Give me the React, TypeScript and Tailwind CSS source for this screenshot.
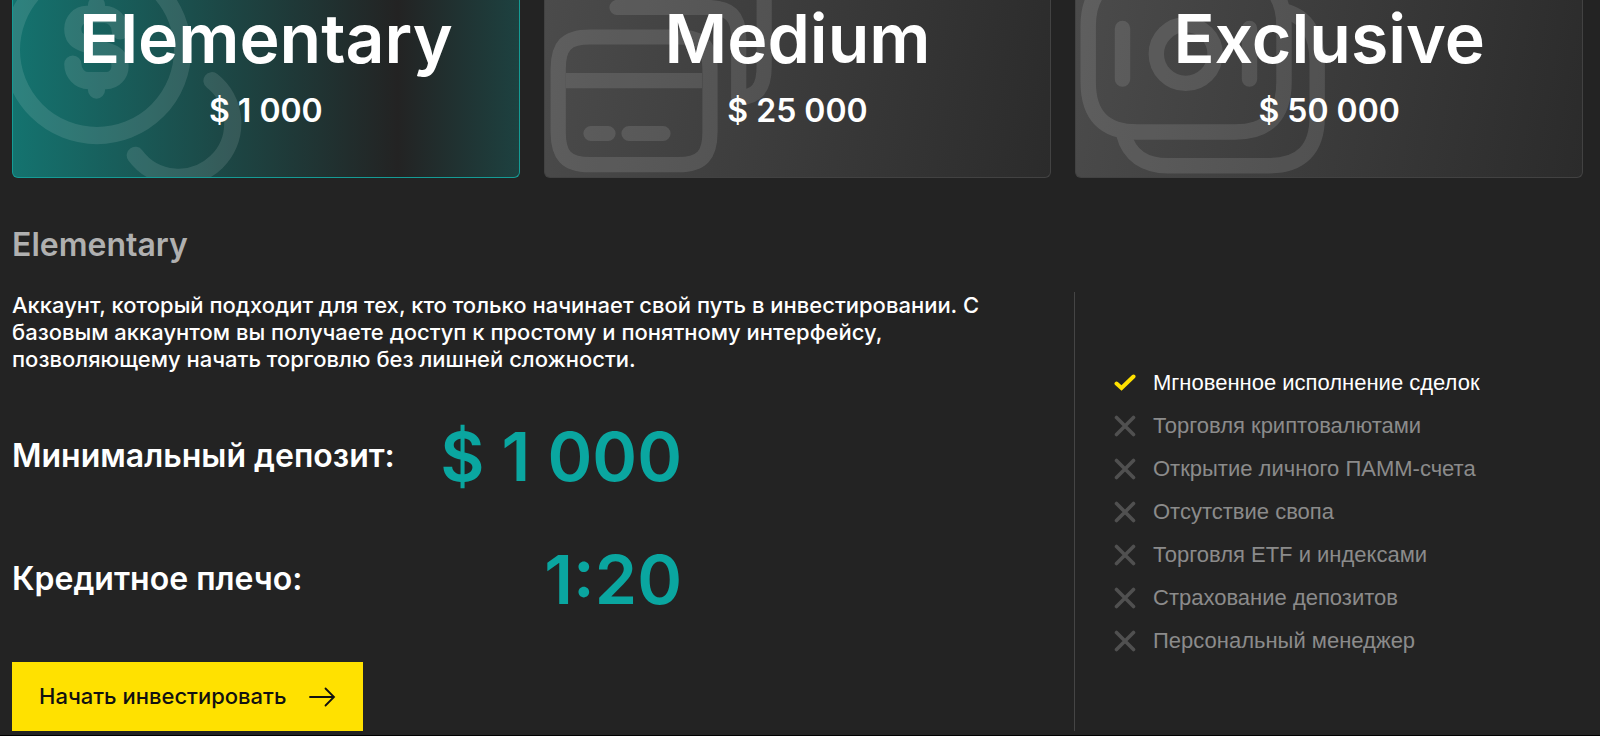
import type { ReactNode } from "react";

const CoinsArt = () => (
  <svg
    aria-hidden="true"
    viewBox="13 0 300 177"
    className="absolute left-0 top-0 h-[177px] w-[300px]"
    fill="none"
    stroke="#fff"
    strokeWidth="17.2"
    strokeLinecap="round"
    strokeLinejoin="round"
  >
    <g opacity="0.11">
      <circle cx="97" cy="50" r="85.6" />
      <path d="M212 80.7A54 54 0 1 1 135.3 155.3" />
      <path
        transform="translate(1.7 -71) scale(11.85)"
        strokeWidth="1.45"
        d="M6 11.4c0 .77.6 1.4 1.33 1.4h1.5c.64 0 1.16-.55 1.16-1.22 0-.73-.32-.99-.79-1.16L6.8 9.58C6.32 9.41 6 9.15 6 8.42c0-.67.52-1.22 1.16-1.22h1.5C9.4 7.21 10 7.83 10 8.6M8 12.85v.74M8 6.41v.78"
      />
    </g>
  </svg>
);

const CardsArt = () => (
  <svg
    aria-hidden="true"
    viewBox="545 0 300 177"
    className="absolute left-0 top-0 h-[177px] w-[300px]"
    fill="none"
    stroke="#fff"
    strokeWidth="15.2"
    strokeLinecap="round"
    strokeLinejoin="round"
  >
    <g opacity="0.11">
      <path d="M590 37H678C702 37 710 46 710 69V132C710 155 702 164.700 678 164.700H590C566 164.700 558.200 155 558.200 132V69C558.200 46 566 37 590 37Z" />
      <path d="M566 80.700H702" strokeLinecap="butt" />
      <path d="M591 133.500H608M629 133.500H663" />
      <path d="M617 7.500H707C730 7.500 738.700 16 738.700 38V97.700C757 97 764.200 88 764.200 66V-20" />
    </g>
  </svg>
);

const BanknotesArt = () => (
  <svg
    aria-hidden="true"
    viewBox="1076 0 300 177"
    className="absolute left-0 top-0 h-[177px] w-[300px]"
    fill="none"
    stroke="#fff"
    strokeWidth="15.4"
    strokeLinecap="round"
    strokeLinejoin="round"
  >
    <g opacity="0.11">
      <path d="M1137 -24H1235C1268 -24 1284 -6 1284 26V82C1284 115 1268 132 1235 132H1137C1104 132 1088.200 115 1088.200 82V26C1088.200 -6 1104 -24 1137 -24Z" />
      <circle cx="1185.700" cy="54" r="29.400" />
      <path d="M1122.500 28.500V79M1249.500 28.500V79" />
      <path
        strokeLinecap="butt"
        d="M1124 135C1129 155 1145 165.700 1168 165.700H1269C1301 165.700 1317.200 149 1317.200 117V62C1317.200 34 1306 16 1284 11"
      />
    </g>
  </svg>
);

type Plan = { name: string; price: string; art: ReactNode; active?: boolean };

const plans: Plan[] = [
  { name: "Elementary", price: "$ 1 000", art: <CoinsArt />, active: true },
  { name: "Medium", price: "$ 25 000", art: <CardsArt /> },
  { name: "Exclusive", price: "$ 50 000", art: <BanknotesArt /> },
];

const features = [
  { label: "Мгновенное исполнение сделок", included: true },
  { label: "Торговля криптовалютами", included: false },
  { label: "Открытие личного ПАММ-счета", included: false },
  { label: "Отсутствие свопа", included: false },
  { label: "Торговля ETF и индексами", included: false },
  { label: "Страхование депозитов", included: false },
  { label: "Персональный менеджер", included: false },
];

const terms = [
  { label: "Минимальный депозит:", value: "$ 1 000" },
  { label: "Кредитное плечо:", value: "1:20" },
];

function PlanCard({ name, price, art, active }: Plan) {
  return (
    <button
      type="button"
      aria-pressed={!!active}
      className={
        "relative block rounded-b-md border-x border-b pb-[46px] text-center font-semibold text-white " +
        (active
          ? "border-[#159b95] bg-[linear-gradient(90deg,#14736f_0%,#232323_76%,#1d4140_100%)]"
          : "border-[#424242] bg-[linear-gradient(100deg,#4b4b4b_0%,#2b2b2b_100%)]")
      }
    >
      {art}
      <span className="relative block pt-1 text-[68px] leading-[68px]">{name}</span>
      <span className="relative mt-[19px] block text-[32px] leading-10">{price}</span>
    </button>
  );
}

function FeatureIcon({ included }: { included: boolean }) {
  return (
    <svg
      aria-hidden="true"
      viewBox="0 0 22 22"
      className="h-[22px] w-[22px] shrink-0"
      fill="none"
      stroke={included ? "#ffe100" : "#505050"}
      strokeWidth={included ? 4 : 3.6}
      strokeLinecap="round"
    >
      {included ? <path d="M2.500 11.500L7.500 16L19.500 4.500" /> : <path d="M2.500 2.500L19.500 19.500M19.500 2.500L2.500 19.500" />}
    </svg>
  );
}

export default function App() {
  return (
    <main className="min-h-screen border-b border-black bg-[#232323] pl-3 pr-[17px] font-['Inter',sans-serif] text-white">
      <div className="grid grid-cols-3 gap-6">
        {plans.map((plan) => (
          <PlanCard key={plan.name} {...plan} />
        ))}
      </div>

      <h2 className="mt-[47px] text-[32px] font-semibold leading-10 text-[#b0b0b0]">Elementary</h2>

      <div className="mt-[27px] grid grid-cols-[minmax(0,1fr)_509px]">
        <section>
          <p className="max-w-[1000px] text-[22px] font-medium leading-[27px]">
            Аккаунт, который подходит для тех, кто только начинает свой путь в инвестировании. С базовым аккаунтом вы
            получаете доступ к простому и понятному интерфейсу, позволяющему начать торговлю без лишней сложности.
          </p>
          <dl className="mt-[39px] flex max-w-[670px] flex-col gap-[35px]">
            {terms.map((term) => (
              <div key={term.label} className="flex items-center justify-between">
                <dt className="text-[32px] font-semibold">{term.label}</dt>
                <dd className="text-[68px] font-semibold leading-[88px] text-[#0aa6a0]">{term.value}</dd>
              </div>
            ))}
          </dl>
          <button
            type="button"
            className="mt-[39px] flex h-[69px] items-center gap-[22px] bg-[#ffe100] px-[27px] text-[22px] font-medium text-[#111]"
          >
            Начать инвестировать
            <svg aria-hidden="true" viewBox="0 0 28 20" className="h-5 w-7" fill="none" stroke="currentColor" strokeWidth="1.8" strokeLinecap="round">
              <path d="M2 10H26M17.500 1.500L26 10L17.500 18.500" />
            </svg>
          </button>
        </section>

        <ul className="flex flex-col justify-center gap-4 border-l border-[#454545] pl-[39px] font-['Liberation_Sans',sans-serif] text-[22px] leading-[27px]">
          {features.map((feature) => (
            <li
              key={feature.label}
              className={"flex items-center gap-[17px] " + (feature.included ? "text-white" : "text-[#8b8b8b]")}
            >
              <FeatureIcon included={feature.included} />
              {feature.label}
            </li>
          ))}
        </ul>
      </div>
    </main>
  );
}
